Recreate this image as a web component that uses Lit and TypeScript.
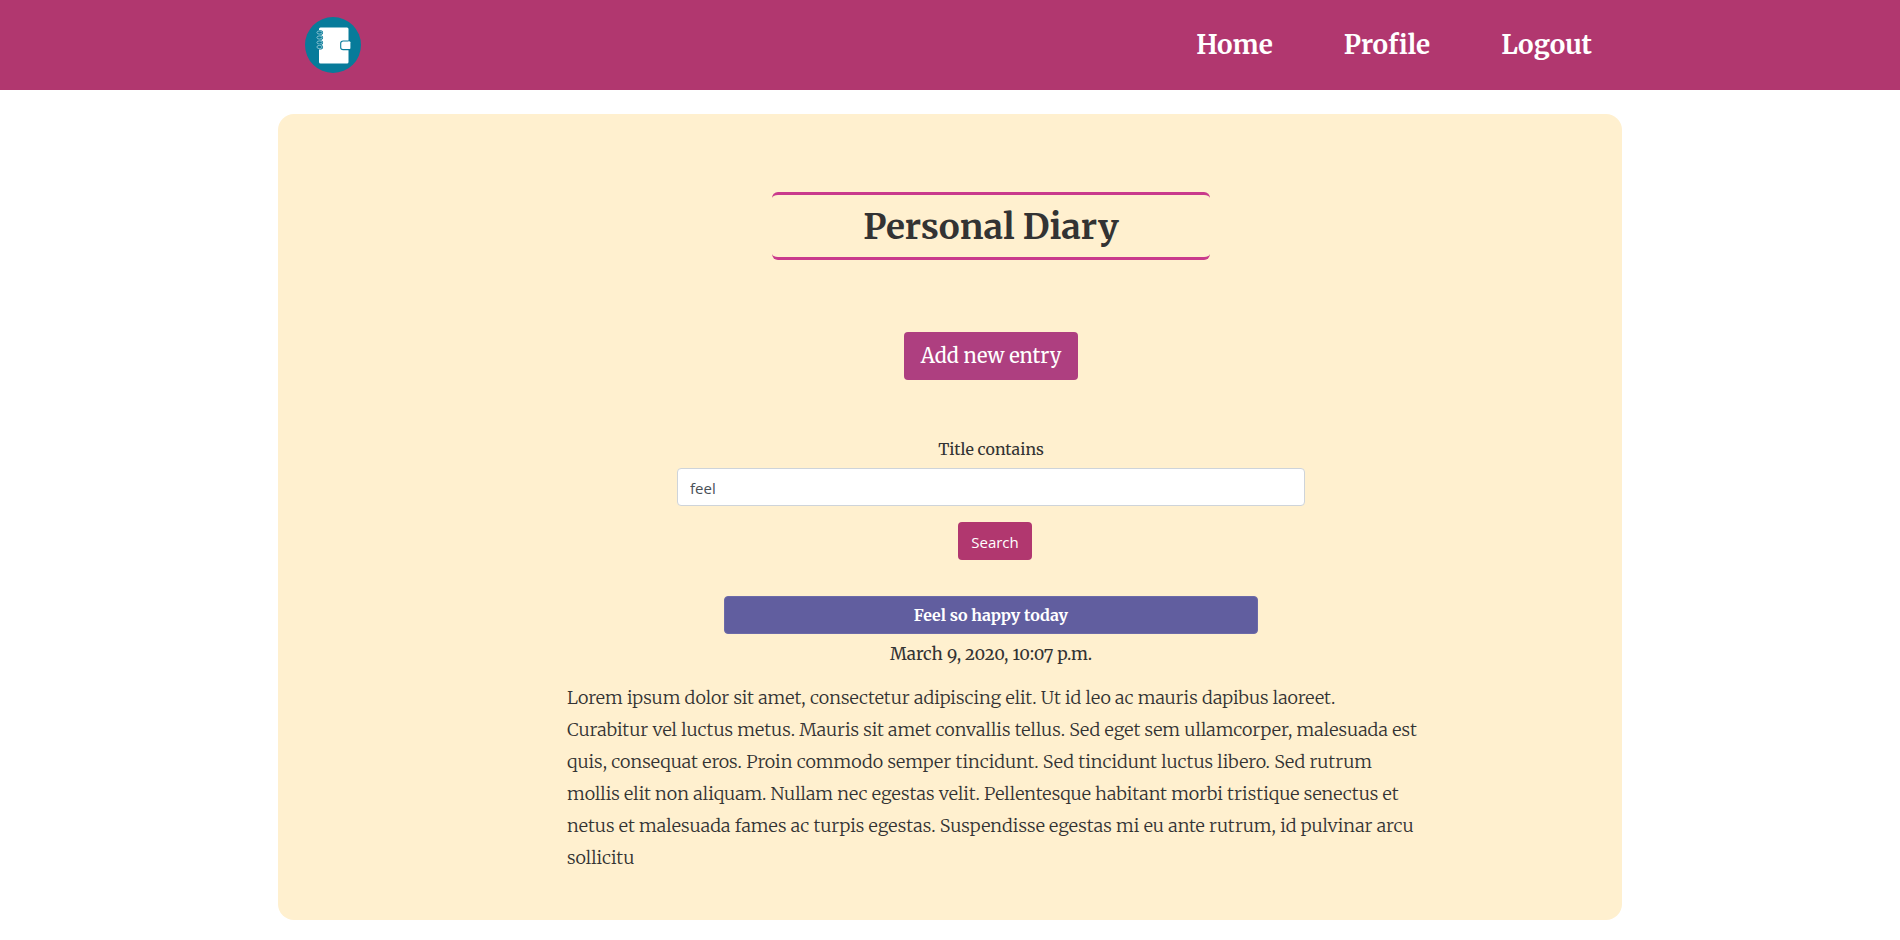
import { LitElement, html, css, svg } from "lit";
import { customElement, state } from "lit/decorators.js";

interface Entry {
  title: string;
  date: string;
  body: string;
}

const COILS = [15.5, 20.5, 25.5, 30];

@customElement("diary-logo")
export class DiaryLogo extends LitElement {
  static styles = css`
    :host { display: block; }
    .logo { display: block; width: 56px; height: 56px; }
  `;

  render() {
    return html`
      <svg class="logo" viewBox="0 0 56 56" aria-hidden="true">
        <circle cx="28" cy="28" r="28" fill="#077b9a" />
        <rect x="14" y="10.5" width="29.5" height="36" rx="1.5" fill="#fff" />
        ${COILS.map(
          (y) => svg`
            <ellipse cx="14.5" cy=${y} rx="2.6" ry="1.6" fill="#077b9a" stroke="#077b9a" stroke-width="2" />
            <ellipse cx="14.5" cy=${y} rx="2.6" ry="1.6" fill="none" stroke="#a5d0dc" stroke-width="0.8" />`
        )}
        <path d="M45 24H38.2Q35.7 24 35.7 26.2V30.4Q35.7 32.6 38.2 32.6H45Z" fill="#fff" stroke="#077b9a" stroke-width="1.1" />
        <rect x="43" y="24.5" width="2.4" height="7.6" rx="0.8" fill="#fff" />
      </svg>
    `;
  }
}

@customElement("app-root")
export class AppRoot extends LitElement {
  static styles = css`
    :host {
      display: block;
      min-height: 100vh;
      background: #fff;
      color: #333;
      font-family: Merriweather, "DejaVu Serif Condensed", "DejaVu Serif", serif;
      font-size: 16px;
      line-height: 24px;
    }
    *, *::before { box-sizing: border-box; }
    .bar { background: #b1376f; color: #fff; }
    .bar-inner {
      display: flex;
      align-items: center;
      justify-content: space-between;
      max-width: 1344px;
      min-height: 90px;
      margin: 0 auto;
      padding: 0 30px 0 27px;
    }
    .links { display: flex; gap: 71px; }
    .link {
      color: #fff;
      font-size: 26px;
      font-weight: 700;
      line-height: 32px;
      text-decoration: none;
    }
    .card {
      display: flex;
      flex-direction: column;
      align-items: center;
      max-width: 1344px;
      margin: 24px auto 20px;
      padding: 78px 0 46px 82px;
      border-radius: 16px;
      background: #fff0cf;
    }
    .title {
      width: 100%;
      max-width: 438px;
      margin: 0 0 72px;
      padding: 9px 0 7px;
      border: 0 solid #c93a8c;
      border-width: 3px 0;
      border-radius: 6px;
      font-size: 35px;
      font-weight: 700;
      line-height: 46px;
      text-align: center;
    }
    .btn {
      border: 1px solid transparent;
      border-radius: 4px;
      color: #fff;
      cursor: pointer;
      text-align: center;
      text-decoration: none;
    }
    .add {
      margin-bottom: 57px;
      padding: 8px 16px;
      background: #ae3f80;
      font-size: 20px;
      line-height: 30px;
    }
    .search {
      display: flex;
      flex-direction: column;
      align-items: center;
      width: 100%;
      max-width: 628px;
      margin-bottom: 36px;
    }
    .label { margin-bottom: 7px; }
    .field {
      width: 100%;
      height: 38px;
      margin-bottom: 16px;
      padding: 6px 12px 4px;
      border: 1px solid #ced4da;
      border-radius: 4px;
      background: #fff;
      color: #495057;
      font: 15px/24px "Segoe UI", "Open Sans", sans-serif;
    }
    .submit {
      margin-left: 8px;
      padding: 7px 12px 5px;
      background: #b1376f;
      font: 15px/24px "Segoe UI", "Open Sans", sans-serif;
    }
    .entry {
      display: flex;
      flex-direction: column;
      align-items: center;
      width: 100%;
      max-width: 852px;
    }
    .entry-title {
      width: 100%;
      max-width: 534px;
      padding: 6px 12px;
      border-color: #6c6aa8;
      background: #615e9f;
      font-weight: 700;
    }
    .date {
      margin: 8px 0 16px;
      font-size: 17px;
      font-variant-numeric: oldstyle-nums;
    }
    .body {
      width: 100%;
      margin: 0;
      padding-left: 2px;
      font-size: 18px;
      font-weight: 300;
      line-height: 32px;
    }
  `;

  @state() private query = "feel";

  private links = ["Home", "Profile", "Logout"];

  private entries: Entry[] = [
    {
      title: "Feel so happy today",
      date: "March 9, 2020, 10:07 p.m.",
      body: "Lorem ipsum dolor sit amet, consectetur adipiscing elit. Ut id leo ac mauris dapibus laoreet. Curabitur vel luctus metus. Mauris sit amet convallis tellus. Sed eget sem ullamcorper, malesuada est quis, consequat eros. Proin commodo semper tincidunt. Sed tincidunt luctus libero. Sed rutrum mollis elit non aliquam. Nullam nec egestas velit. Pellentesque habitant morbi tristique senectus et netus et malesuada fames ac turpis egestas. Suspendisse egestas mi eu ante rutrum, id pulvinar arcu sollicitu",
    },
  ];

  private onInput(e: Event) {
    this.query = (e.target as HTMLInputElement).value;
  }

  render() {
    return html`
      <header class="bar">
        <div class="bar-inner">
          <a href="#" aria-label="Diary"><diary-logo></diary-logo></a>
          <nav class="links">
            ${this.links.map((l) => html`<a class="link" href="#">${l}</a>`)}
          </nav>
        </div>
      </header>
      <main class="card">
        <h1 class="title">Personal Diary</h1>
        <a class="btn add" href="#">Add new entry</a>
        <form class="search" @submit=${(e: Event) => e.preventDefault()}>
          <label class="label" for="title-query">Title contains</label>
          <input class="field" id="title-query" type="text" .value=${this.query} @input=${this.onInput} />
          <button class="btn submit" type="submit">Search</button>
        </form>
        ${this.entries.map(
          (entry) => html`
            <article class="entry">
              <a class="btn entry-title" href="#">${entry.title}</a>
              <time class="date">${entry.date}</time>
              <p class="body">${entry.body}</p>
            </article>`
        )}
      </main>
    `;
  }
}
